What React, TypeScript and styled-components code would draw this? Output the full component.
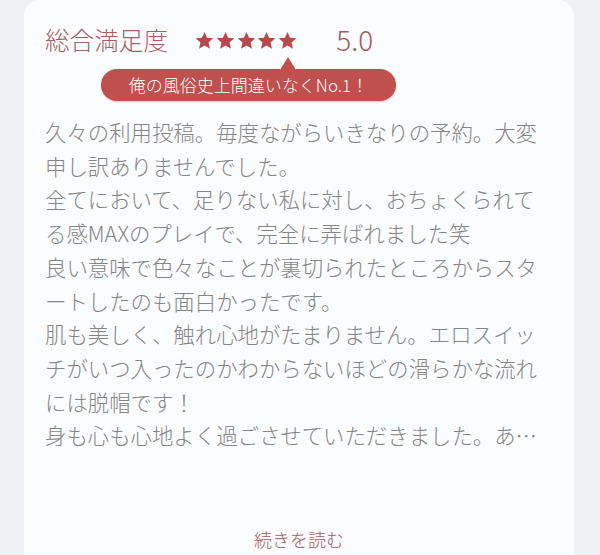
import * as React from 'react';
import styled, { createGlobalStyle } from 'styled-components';

const GlobalStyle = createGlobalStyle`
  html, body {
    margin: 0;
    padding: 0;
    background: #eef1f3;
    font-family: "Noto Sans CJK JP", "Noto Sans", sans-serif;
  }
`;

const Page = styled.div`
  width: 600px;
  height: 555px;
  overflow: hidden;
  padding: 0 26px 0 24px;
  box-sizing: border-box;
`;

const Card = styled.div`
  background: #fbfcfd;
  border-radius: 16px 16px 0 0;
  height: 600px;
  padding: 21px 0 0 21px;
  box-sizing: border-box;
`;

const Header = styled.div`
  display: flex;
  align-items: center;
  height: 36px;
`;

const Title = styled.h2`
  margin: 0;
  font-size: 24.6px;
  font-weight: 300;
  line-height: 36px;
  color: #a65e5f;
`;

const Stars = styled.div`
  display: flex;
  gap: 1.8px;
  margin-left: 27px;
  margin-top: 2px;
`;

const Score = styled.span`
  margin-left: 39px;
  font-size: 28px;
  line-height: 36px;
  color: #a35b5c;
  font-weight: 300;
`;

const Bubble = styled.div`
  position: relative;
  margin: 12px 0 0 56px;
  width: 295px;
  height: 32px;
  border-radius: 16px;
  background: #c0504e;
  color: #fff;
  font-size: 17px;
  font-weight: 300;
  line-height: 32px;
  text-align: center;
  box-shadow: 0 1px 2px rgba(150, 60, 60, 0.25);
`;

const Tail = styled.span`
  position: absolute;
  left: 179px;
  top: -12px;
  width: 0;
  height: 0;
  border-left: 8px solid transparent;
  border-right: 8px solid transparent;
  border-bottom: 13px solid #c0504e;
`;

const Body = styled.p`
  margin: 14px 0 0 0;
  width: 500px;
  font-size: 21.4px;
  line-height: 33.7px;
  font-weight: 200;
  color: #858585;
  line-break: anywhere;
`;

const ReadMore = styled.div`
  margin-top: 74px;
  padding-right: 21px;
  text-align: center;
  font-size: 18px;
  font-weight: 300;
  line-height: 27px;
  color: #a35b5c;
`;

const Star: React.FC = () => (
  <svg width="19" height="19" viewBox="0 0 24 24">
    <path
      d="M12 1.2l3.2 7.3 7.9.7-6 5.3 1.8 7.8L12 18.2l-6.9 4.1 1.8-7.8-6-5.3 7.9-.7z"
      fill="#b9484a"
    />
  </svg>
);

export default function App() {
  return (
    <Page>
      <GlobalStyle />
      <Card>
        <Header>
          <Title>総合満足度</Title>
          <Stars>
            {[0, 1, 2, 3, 4].map((i) => (
              <Star key={i} />
            ))}
          </Stars>
          <Score>5.0</Score>
        </Header>
        <Bubble>
          <Tail />
          俺の風俗史上間違いなくNo.1！
        </Bubble>
        <Body>
          久々の利用投稿。毎度ながらいきなりの予約。大変申し訳ありませんでした。
          <br />
          全てにおいて、足りない私に対し、おちょくられてる感MAXのプレイで、完全に弄ばれました笑
          <br />
          良い意味で色々なことが裏切られたところからスタートしたのも面白かったです。
          <br />
          肌も美しく、触れ心地がたまりません。エロスイッチがいつ入ったのかわからないほどの滑らかな流れには脱帽です！
          <br />
          身も心も心地よく過ごさせていただきました。あ…
        </Body>
        <ReadMore>続きを読む</ReadMore>
      </Card>
    </Page>
  );
}
